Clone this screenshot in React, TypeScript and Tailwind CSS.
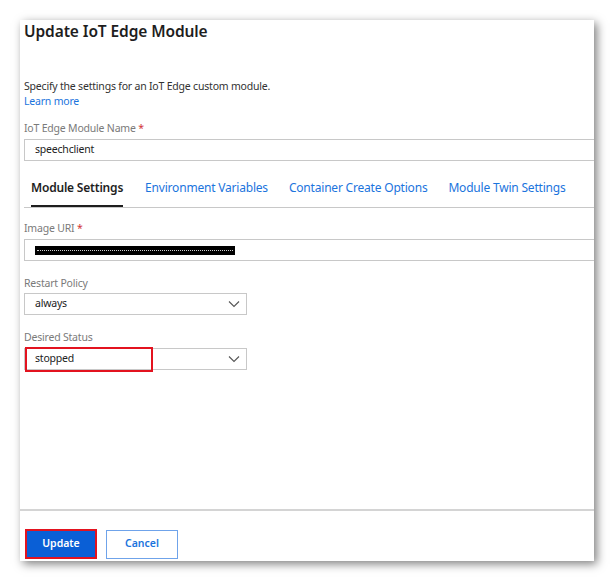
import React from "react";

const font = { fontFamily: '"Noto Sans", "Open Sans", sans-serif' };

function Chevron() {
  return (
    <svg width="12" height="8" viewBox="0 0 12 8" className="shrink-0">
      <path d="M1 1.5 L6 6.5 L11 1.5" fill="none" stroke="#555" strokeWidth="1.1" />
    </svg>
  );
}

export default function App() {
  return (
    <div className="w-[614px] h-[582px] bg-white overflow-hidden" style={font}>
      <div className="ml-[20px] mt-[20px] w-[574px] h-[541px] bg-white shadow-[3px_3px_9px_rgba(0,0,0,0.5)] flex flex-col overflow-hidden">
        <div className="flex-1 pl-[4px] flex flex-col [&>*]:shrink-0">
          <div className="text-[15.5px] leading-[22px] font-semibold text-[#1e1e1e] tracking-[-0.1px]">
            Update IoT Edge Module
          </div>
          <div className="mt-[37px] text-[10.5px] leading-[14px] tracking-[-0.2px] text-[#323232]">
            Specify the settings for an IoT Edge custom module.
          </div>
          <div className="mt-[1px] text-[10.5px] leading-[14px] tracking-[-0.2px] text-[#1b74dd]">Learn more</div>
          <div className="mt-[13px] text-[10.5px] leading-[14px] tracking-[-0.2px] text-[#7a7a7a]">
            IoT Edge Module Name <span className="text-[#d13438]">*</span>
          </div>
          <div className="mt-[4px] h-[22px] border border-[#c8c8c8] border-r-0 flex items-center pl-[10px] text-[10.5px] tracking-[-0.2px] text-[#222]">
            speechclient
          </div>
          <div className="h-[47px] border-b border-[#c8c8c8] flex items-end text-[12px] leading-[18px] tracking-[-0.2px] whitespace-nowrap">
            <div className="ml-[7px] h-[28px] flex flex-col justify-between">
              <span className="font-semibold text-[#1e1e1e]">Module Settings</span>
              <div className="h-[2px] bg-[#1e1e1e]" />
            </div>
            <div className="ml-[22px] h-[28px] text-[#1b74dd]">Environment Variables</div>
            <div className="ml-[21px] h-[28px] text-[#1b74dd]">Container Create Options</div>
            <div className="ml-[21px] h-[28px] text-[#1b74dd]">Module Twin Settings</div>
          </div>
          <div className="mt-[13px] text-[10.5px] leading-[14px] tracking-[-0.2px] text-[#7a7a7a]">
            Image URI <span className="text-[#d13438]">*</span>
          </div>
          <div className="mt-[4px] h-[22px] border border-[#c8c8c8] border-r-0 flex items-center pl-[10px]">
            <div className="w-[200px] h-[9px] bg-black flex items-center px-[2px]">
              <div className="w-full border-t border-dotted border-[#cfcfcf]" />
            </div>
          </div>
          <div className="mt-[15px] text-[10.5px] leading-[14px] tracking-[-0.2px] text-[#7a7a7a]">Restart Policy</div>
          <div className="mt-[3px] w-[223px] h-[22px] border border-[#c8c8c8] flex items-center justify-between pl-[10px] pr-[6px] text-[10.5px] tracking-[-0.2px] text-[#222]">
            <span>always</span>
            <Chevron />
          </div>
          <div className="mt-[15px] text-[10.5px] leading-[14px] tracking-[-0.2px] text-[#7a7a7a]">Desired Status</div>
          <div className="relative mt-[4px] w-[223px] h-[22px] border border-[#c8c8c8] flex items-center justify-between pl-[10px] pr-[6px] text-[10.5px] tracking-[-0.2px] text-[#222]">
            <span>stopped</span>
            <Chevron />
            <div className="absolute left-[0px] top-[-2px] w-[128px] h-[25px] border-2 border-[#e3131f]" />
          </div>
        </div>
        <div className="h-[2px] bg-[#d4d4d4] shrink-0" />
        <div className="mt-[18px] mb-[2px] pl-[5px] flex items-center shrink-0">
          <div className="w-[72px] h-[30px] border-2 border-[#e3131f] bg-[#0a5fd6] flex items-center justify-center text-[10.5px] font-semibold text-white">
            Update
          </div>
          <div className="ml-[9px] w-[72px] h-[29px] border border-[#6fa3ea] bg-white flex items-center justify-center text-[10.5px] font-semibold text-[#1b74dd]">
            Cancel
          </div>
        </div>
      </div>
    </div>
  );
}
